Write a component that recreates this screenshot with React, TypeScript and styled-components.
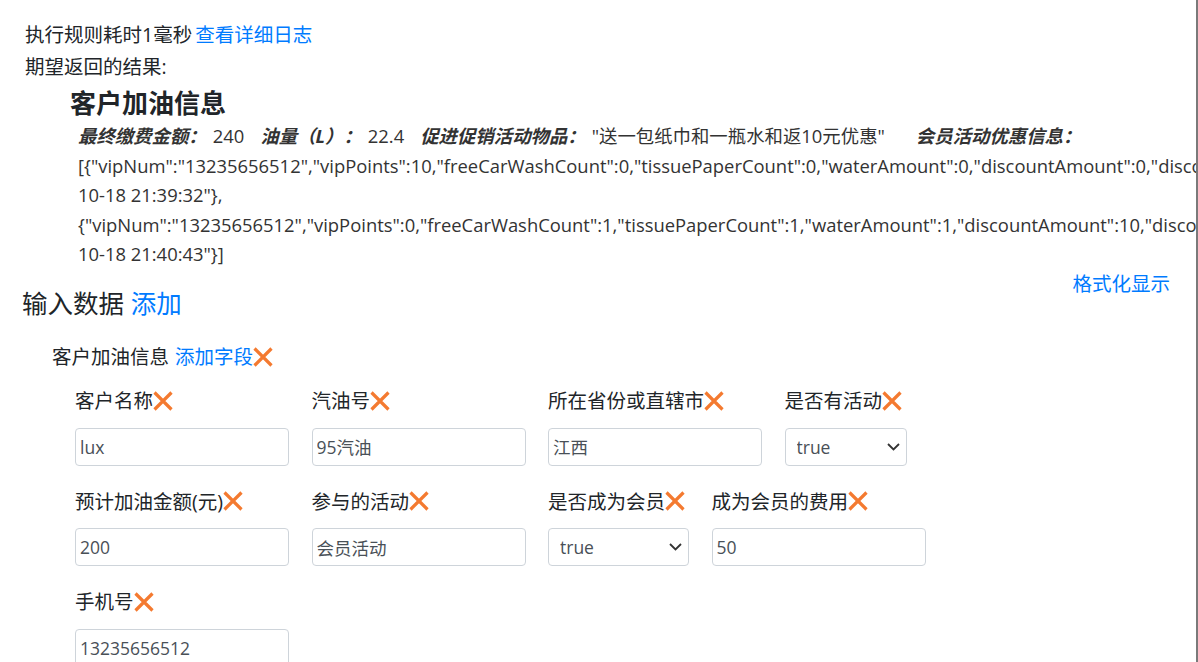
import React from "react";
import styled, { createGlobalStyle } from "styled-components";

const GlobalStyle = createGlobalStyle`
  html, body { margin: 0; padding: 0; background: #fff; }
  body {
    font-family: "Segoe UI", "Open Sans", "Noto Sans CJK SC", sans-serif;
    color: #212529;
  }
  * { box-sizing: border-box; }
`;

const Page = styled.div`
  width: 1198px;
  height: 662px;
  overflow: hidden;
  border-right: 2px solid #7a7a7a;
  padding: 19px 0 0 25px;
`;

const StatusLine = styled.div`
  font-size: 19.5px;
  line-height: 32px;
  white-space: nowrap;
`;

const Link = styled.a`
  color: #007bff;
  text-decoration: none;
  cursor: pointer;
`;

const LinkGap = styled.span`
  display: inline-block;
  width: 3px;
`;

const ResultBlock = styled.div`
  padding-left: 45px;
  margin-top: 4.5px;
`;

const ResultTitle = styled.div`
  font-size: 26px;
  font-weight: 700;
  line-height: 31px;
  margin-bottom: 2.5px;
`;

const ResultBody = styled.div`
  padding-left: 8px;
  font-size: 18.4px;
  line-height: 29.5px;
  color: #333;
`;

const ResultLine = styled.div`
  white-space: nowrap;
`;

const Key = styled.b`
  font-style: italic;
  font-weight: 700;
  margin-right: 6px;
`;

const Value = styled.span<{ $gap?: number }>`
  margin-right: ${(p) => p.$gap ?? 16}px;
`;

const HeaderRow = styled.div`
  display: flex;
  justify-content: space-between;
  align-items: flex-start;
  padding-right: 26px;
`;

const SectionHeading = styled.div`
  font-size: 25.5px;
  line-height: 31px;
  margin: 19.5px 0 0 -3px;
`;

const FormatLink = styled(Link)`
  font-size: 19.5px;
  line-height: 29px;
`;

const GroupTitle = styled.div`
  display: flex;
  align-items: center;
  margin: 23px 0 0 27px;
  font-size: 19.5px;
  line-height: 29px;
  white-space: nowrap;
`;

const Spacer = styled.span`
  display: inline-block;
  width: 6px;
`;

const FieldGrid = styled.div`
  display: flex;
  flex-wrap: wrap;
  column-gap: 22.5px;
  width: 960px;
  margin: 15px 0 0 50px;
`;

const Field = styled.div`
  display: flex;
  flex-direction: column;
  align-items: flex-start;
  margin-bottom: 21px;
`;

const FieldLabel = styled.label`
  display: flex;
  align-items: center;
  font-size: 19.5px;
  line-height: 29px;
  margin-bottom: 12.5px;
  white-space: nowrap;
  color: #212529;
`;

const TextInput = styled.input`
  width: 214px;
  height: 38px;
  border: 1px solid #ced4da;
  border-radius: 4px;
  padding: 0 4px;
  font-family: inherit;
  font-size: 17.5px;
  color: #495057;
  background: #fff;
  outline: none;
`;

const SelectWrap = styled.div<{ $w: number }>`
  position: relative;
  width: ${(p) => p.$w}px;
  height: 38px;
`;

const Select = styled.select`
  appearance: none;
  -webkit-appearance: none;
  width: 100%;
  height: 38px;
  border: 1px solid #ced4da;
  border-radius: 4px;
  padding: 0 28px 0 11px;
  font-family: inherit;
  font-size: 17.5px;
  color: #495057;
  background: #fff;
  outline: none;
`;

const Chevron = styled.svg`
  position: absolute;
  right: 7px;
  top: 15px;
  pointer-events: none;
`;

const RemoveIcon = () => (
  <svg width="20" height="20" viewBox="0 0 20 20" style={{ flex: "none" }}>
    <path d="M1.5 1.5 L18.5 18.5 M18.5 1.5 L1.5 18.5" stroke="#f47a30" strokeWidth="3.2" fill="none" />
  </svg>
);

type FieldDef =
  | { label: string; kind: "text"; value: string }
  | { label: string; kind: "select"; value: string; width: number };

const fields: FieldDef[] = [
  { label: "客户名称", kind: "text", value: "lux" },
  { label: "汽油号", kind: "text", value: "95汽油" },
  { label: "所在省份或直辖市", kind: "text", value: "江西" },
  { label: "是否有活动", kind: "select", value: "true", width: 122 },
  { label: "预计加油金额(元)", kind: "text", value: "200" },
  { label: "参与的活动", kind: "text", value: "会员活动" },
  { label: "是否成为会员", kind: "select", value: "true", width: 141 },
  { label: "成为会员的费用", kind: "text", value: "50" },
  { label: "手机号", kind: "text", value: "13235656512" },
];

export default function App() {
  return (
    <>
      <GlobalStyle />
      <Page>
        <StatusLine>
          执行规则耗时1毫秒<LinkGap />
          <Link>查看详细日志</Link>
        </StatusLine>
        <StatusLine>期望返回的结果:</StatusLine>
        <ResultBlock>
          <ResultTitle>客户加油信息</ResultTitle>
          <ResultBody>
            <ResultLine>
              <Key>最终缴费金额：</Key>
              <Value>240</Value>
              <Key>油量（L）：</Key>
              <Value>22.4</Value>
              <Key>促进促销活动物品：</Key>
              <Value $gap={31}>"送一包纸巾和一瓶水和返10元优惠"</Value>
              <Key>会员活动优惠信息：</Key>
            </ResultLine>
            <ResultLine>
              [{"{"}"vipNum":"13235656512","vipPoints":10,"freeCarWashCount":0,"tissuePaperCount":0,"waterAmount":0,"discountAmount":0,"discountType":"会员优惠","createTime":"2019-
            </ResultLine>
            <ResultLine>10-18 21:39:32"{"}"},</ResultLine>
            <ResultLine>
              {"{"}"vipNum":"13235656512","vipPoints":0,"freeCarWashCount":1,"tissuePaperCount":1,"waterAmount":1,"discountAmount":10,"discountType":"活动优惠","createTime":"2019-
            </ResultLine>
            <ResultLine>10-18 21:40:43"{"}"}]</ResultLine>
          </ResultBody>
        </ResultBlock>
        <HeaderRow>
          <SectionHeading>
            输入数据 <Link>添加</Link>
          </SectionHeading>
          <FormatLink>格式化显示</FormatLink>
        </HeaderRow>
        <GroupTitle>
          客户加油信息<Spacer />
          <Link>添加字段</Link>
          <RemoveIcon />
        </GroupTitle>
        <FieldGrid>
          {fields.map((f) => (
            <Field key={f.label}>
              <FieldLabel>
                {f.label}
                <RemoveIcon />
              </FieldLabel>
              {f.kind === "text" ? (
                <TextInput defaultValue={f.value} />
              ) : (
                <SelectWrap $w={f.width}>
                  <Select defaultValue={f.value}>
                    <option value="true">true</option>
                    <option value="false">false</option>
                  </Select>
                  <Chevron width="13" height="8" viewBox="0 0 13 8">
                    <path d="M1 1 L6.5 6.5 L12 1" stroke="#333" strokeWidth="1.8" fill="none" />
                  </Chevron>
                </SelectWrap>
              )}
            </Field>
          ))}
        </FieldGrid>
      </Page>
    </>
  );
}
